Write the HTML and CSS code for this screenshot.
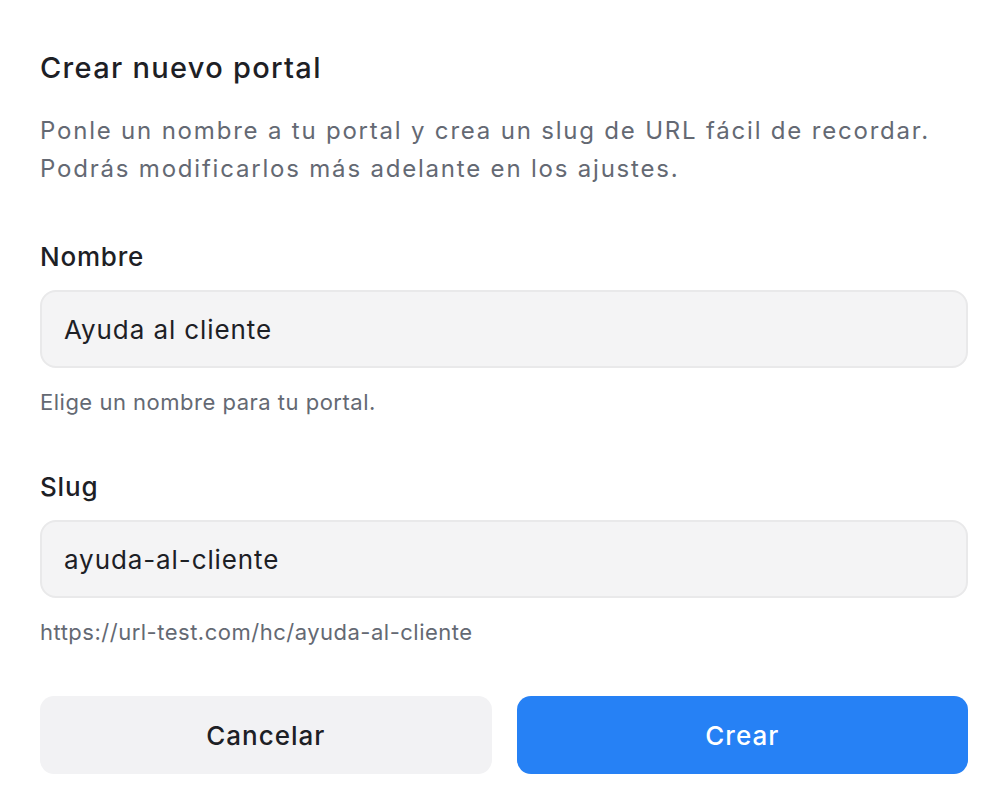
FILE: index.html
```html
<!DOCTYPE html>
<html lang="es">
<head>
<meta charset="utf-8">
<title>Crear nuevo portal</title>
<link rel="stylesheet" href="styles.css">
</head>
<body>
<div class="dialog">
  <header class="head">
    <h1 class="title">Crear nuevo portal</h1>
    <p class="desc">Ponle un nombre a tu portal y crea un slug de URL fácil de recordar. Podrás modificarlos más adelante en los ajustes.</p>
  </header>
  <div class="field">
    <label class="label" for="name">Nombre</label>
    <input class="input" id="name" type="text" value="Ayuda al cliente">
    <p class="help">Elige un nombre para tu portal.</p>
  </div>
  <div class="field">
    <label class="label" for="slug">Slug</label>
    <input class="input" id="slug" type="text" value="ayuda-al-cliente">
    <p class="help">https://url-test.com/hc/ayuda-al-cliente</p>
  </div>
  <div class="actions">
    <button class="btn btn-secondary" type="button">Cancelar</button>
    <button class="btn btn-primary" type="button">Crear</button>
  </div>
</div>
</body>
</html>
```

FILE: styles.css
```css
* { box-sizing: border-box; }
html, body { margin: 0; padding: 0; background: #ffffff; }
body {
  font-family: Inter, "Noto Sans", "Liberation Sans", sans-serif;
  color: #1d2025;
}
.dialog {
  padding: 50px 38px 0 40px;
  display: flex;
  flex-direction: column;
}
.head { display: flex; flex-direction: column; gap: 26px; }
.title {
  margin: 0;
  font-size: 29px;
  line-height: 36px;
  font-weight: 500;
  letter-spacing: 1.3px;
  color: #1d2025;
}
.desc {
  margin: 0;
  font-size: 24px;
  line-height: 38px;
  letter-spacing: 1.8px;
  color: #646973;
  font-weight: 400;
}
.field {
  display: flex;
  flex-direction: column;
  margin-top: 53px;
}
.field + .field { margin-top: 55px; }
.label {
  font-size: 26px;
  line-height: 32px;
  font-weight: 500;
  letter-spacing: 0.8px;
  color: #1d2025;
}
.input {
  margin-top: 17px;
  height: 78px;
  width: 100%;
  border: 2px solid #e9e9ea;
  background: #f4f4f5;
  border-radius: 16px;
  padding: 0 22px;
  font-family: inherit;
  font-size: 26px;
  letter-spacing: 0.9px;
  color: #1d2025;
  outline: none;
}
.help {
  margin: 20px 0 0;
  font-size: 22px;
  line-height: 28px;
  letter-spacing: 0.5px;
  color: #646973;
}
.actions {
  margin-top: 50px;
  display: grid;
  grid-template-columns: 1fr 1fr;
  gap: 25px;
}
.btn {
  height: 78px;
  border: none;
  border-radius: 14px;
  font-family: inherit;
  font-size: 26px;
  font-weight: 500;
  letter-spacing: 1px;
}
.btn-secondary { background: #f2f2f4; color: #1d2025; }
.btn-primary { background: #2681f5; color: #ffffff; }
```
